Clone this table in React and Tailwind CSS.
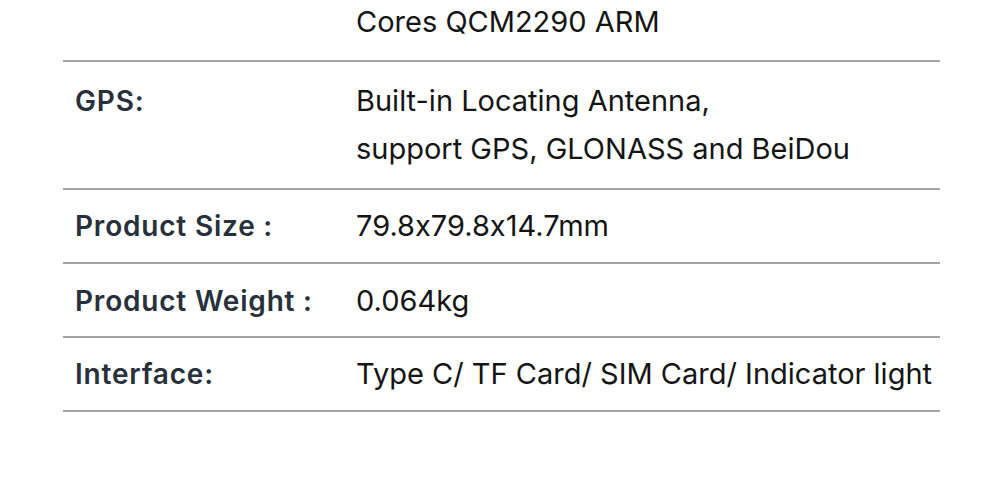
const rows = [
  { label: "GPS:", value: ["Built-in Locating Antenna,", "support GPS, GLONASS and BeiDou"], h: "h-[128px]", pt: "pt-[15px]" },
  { label: "Product Size :", value: ["79.8x79.8x14.7mm"], h: "h-[74px]", pt: "pt-[12px]" },
  { label: "Product Weight :", value: ["0.064kg"], h: "h-[74px]", pt: "pt-[13px]" },
  { label: "Interface:", value: ["Type C/ TF Card/ SIM Card/ Indicator light"], h: "h-[74px]", pt: "pt-[12px]" },
];

export default function App() {
  return (
    <div className="w-[1000px] h-[486px] bg-white overflow-hidden font-['Inter',sans-serif] [font-feature-settings:'calt'_0]">
      <div className="ml-[63px] w-[877px]">
        {/* tail of previous row */}
        <div className="h-[62px] border-b-2 border-[#a3a3a3] flex">
          <div className="w-[293px]" />
          <div className="text-[29px] leading-[44px] text-[#141414]">Cores QCM2290 ARM</div>
        </div>
        {rows.map((r) => (
          <div key={r.label} className={`${r.h} ${r.pt} border-b-2 border-[#a3a3a3] flex`}>
            <div className="w-[293px] pl-[12px] text-[28px] leading-[48px] font-semibold text-[#27303b] tracking-[0.8px] whitespace-nowrap">
              {r.label}
            </div>
            <div className="text-[29px] leading-[48px] text-[#141414] whitespace-nowrap">
              {r.value.map((v) => (
                <div key={v}>{v}</div>
              ))}
            </div>
          </div>
        ))}
      </div>
    </div>
  );
}
